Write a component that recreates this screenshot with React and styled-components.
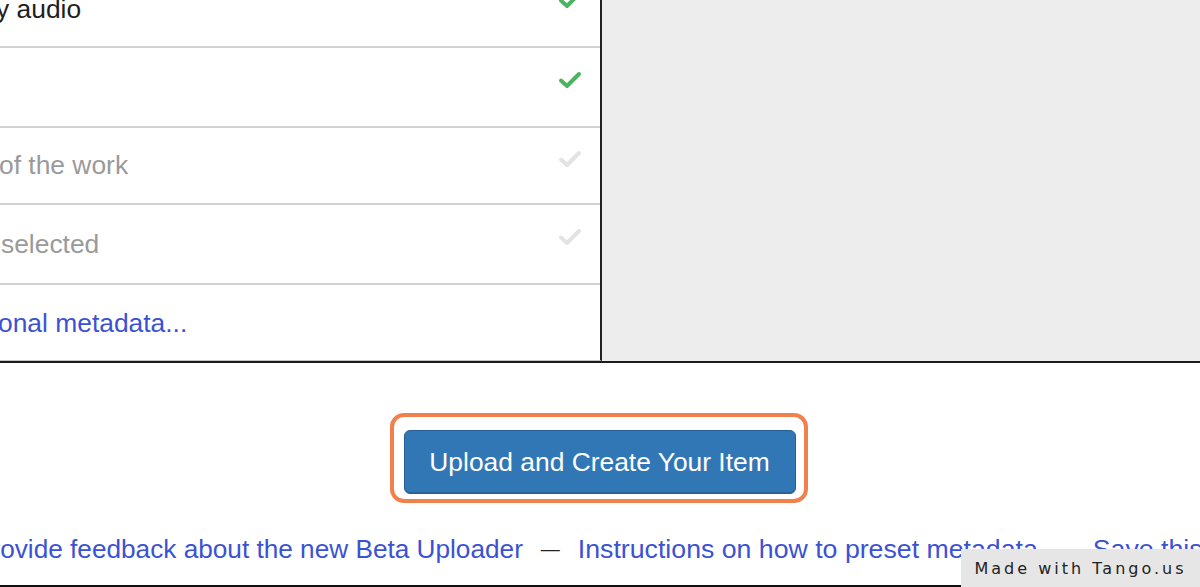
import styled, { createGlobalStyle } from 'styled-components'

const GlobalStyle = createGlobalStyle`
  html, body {
    margin: 0;
    padding: 0;
    background: #ffffff;
    overflow: hidden;
  }
  body {
    font-family: "Liberation Sans", Arial, Helvetica, sans-serif;
    width: 1200px;
    height: 587px;
  }
`;

const Pagina = styled.div`
  width: 1200px;
  height: 587px;
  overflow: hidden;
  position: relative;
`;

const Topo = styled.div`
  display: flex;
  height: 363px;
  border-bottom: 2px solid #1c1c1c;
  box-sizing: border-box;
`;

const Painel = styled.div`
  width: 602px;
  flex-shrink: 0;
  border-right: 2px solid #222;
  box-sizing: border-box;
  background: #fff;
  overflow: hidden;
  border-bottom: 1px solid #c4c4c4;
`;

const Lista = styled.div`
  margin-top: -27px;
`;

const Linha = styled.div`
  display: flex;
  align-items: center;
  justify-content: space-between;
  height: ${({ $altura }) => $altura}px;
  box-sizing: border-box;
  border-bottom: ${({ $ultima }) => ($ultima ? 'none' : '2px solid #d2d2d2')};
  padding-right: 18px;
`;

const Texto = styled.span`
  font-size: 26.4px;
  white-space: nowrap;
  margin-left: ${({ $recuo }) => $recuo || 0}px;
  color: ${({ $tipo }) =>
    $tipo === 'link' ? '#3b52d4' : $tipo === 'apagado' ? '#9a9a9a' : '#1e1e1e'};
`;

const Check = styled.svg`
  align-self: flex-start;
  margin-top: ${({ $topo }) => $topo}px;
  width: 24px;
  height: 18px;
  flex-shrink: 0;
`;

const Cinza = styled.div`
  flex: 1;
  background: #ededed;
`;

const Rodape = styled.div`
  display: flex;
  flex-direction: column;
  align-items: center;
`;

const Destaque = styled.div`
  margin-top: 50px;
  padding: 13px 8px 5px 10px;
  border: 4px solid #f2804d;
  border-radius: 14px;
  margin-right: 3px;
`;

const Botao = styled.button`
  width: 392px;
  height: 64px;
  background: #3177b6;
  border: 1px solid #255f95;
  border-radius: 6px;
  color: #fff;
  font-family: "Liberation Sans", Arial, sans-serif;
  font-size: 26.4px;
  cursor: pointer;
  box-shadow: inset 0 -1px 0 rgba(0, 0, 0, 0.15);
`;

const Links = styled.div`
  align-self: flex-start;
  display: flex;
  align-items: center;
  gap: 18px;
  margin-top: 31px;
  margin-left: -26px;
  white-space: nowrap;
  height: 30px;
`;

const Link = styled.a`
  font-size: ${({ $tam }) => $tam || 26.7}px;
  color: #3b52d4;
  text-decoration: none;
`;

const Traco = styled.span`
  font-size: 19px;
  color: #222;
`;

const Linha2 = styled.div`
  align-self: stretch;
  margin-top: 21px;
  border-top: 2px solid #111;
`;

const Selo = styled.div`
  position: absolute;
  right: 0;
  bottom: 0;
  width: 239px;
  height: 38px;
  background: #e6e6e6;
  display: flex;
  align-items: center;
  justify-content: center;
  font-family: "DejaVu Sans", "Liberation Sans", sans-serif;
  font-size: 16px;
  letter-spacing: 3px;
  color: #222;
`;

const linhas = [
  { texto: 'y audio', tipo: 'normal', altura: 75, check: true, recuo: -4, topo: 18 },
  { texto: '', tipo: 'normal', altura: 80, check: true, topo: 23 },
  { texto: 'of the work', tipo: 'apagado', altura: 77, check: false, recuo: -1, topo: 22 },
  { texto: 'selected', tipo: 'apagado', altura: 80, check: false, recuo: 1, topo: 23 },
  { texto: 'onal metadata...', tipo: 'link', altura: 76, ultima: true, recuo: -2 },
];

function IconeCheck({ ativo, topo }) {
  return (
    <Check $topo={topo} viewBox="0 0 24 18">
      <polyline
        points="3,9.5 9,15 21,3"
        fill="none"
        stroke={ativo ? '#4cb35f' : '#e3e3e3'}
        strokeWidth="4"
        strokeLinecap="round"
        strokeLinejoin="round"
      />
    </Check>
  );
}

export default function App() {
  return (
    <Pagina>
      <GlobalStyle />
      <Topo>
        <Painel>
          <Lista>
            {linhas.map((item, index) => (
              <Linha key={index} $altura={item.altura} $ultima={item.ultima}>
                <Texto $tipo={item.tipo} $recuo={item.recuo}>{item.texto}</Texto>
                {item.ultima ? null : <IconeCheck ativo={item.check} topo={item.topo} />}
              </Linha>
            ))}
          </Lista>
        </Painel>
        <Cinza />
      </Topo>

      <Rodape>
        <Destaque>
          <Botao>Upload and Create Your Item</Botao>
        </Destaque>
        <Links>
          <Link href="#" $tam={26.2}>Provide feedback about the new Beta Uploader</Link>
          <Traco>—</Traco>
          <Link href="#">Instructions on how to preset metadata</Link>
          <Traco>—</Traco>
          <Link href="#">Save this upload as a template</Link>
        </Links>
        <Linha2 />
      </Rodape>

      <Selo>Made with Tango.us</Selo>
    </Pagina>
  )
}
